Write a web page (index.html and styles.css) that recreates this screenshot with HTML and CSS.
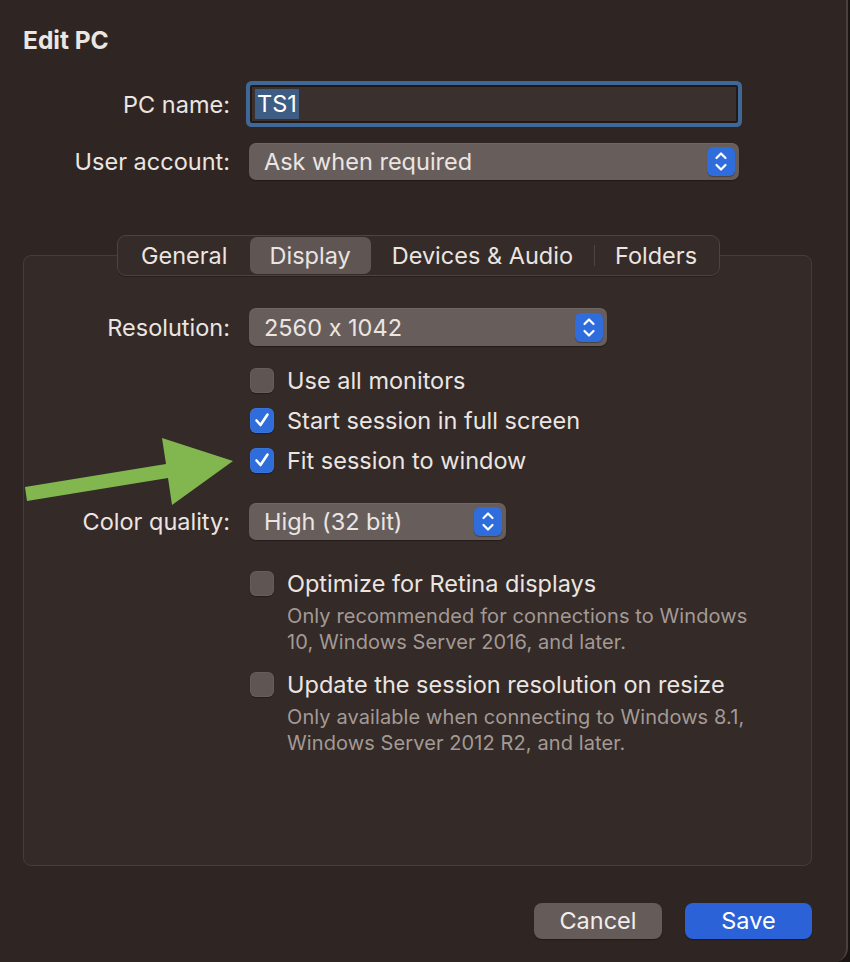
FILE: index.html
```html
<!DOCTYPE html>
<html>
<head>
<meta charset="utf-8">
<link rel="stylesheet" href="styles.css">
</head>
<body>
<div class="window">
  <h1 class="title">Edit PC</h1>

  <div class="form">
    <div class="row row-name">
      <div class="label">PC name:</div>
      <div class="field"><span class="sel">TS1</span></div>
    </div>
    <div class="row row-account">
      <div class="label">User account:</div>
      <div class="popup popup-account">
        <span>Ask when required</span>
        <span class="stepper"><svg viewBox="0 0 28 29" width="28" height="29"><path d="M9.5 11 L14 6.5 L18.5 11 M9.5 18 L14 22.5 L18.5 18" fill="none" stroke="#fff" stroke-width="2.2" stroke-linecap="round" stroke-linejoin="round"/></svg></span>
      </div>
    </div>
  </div>

  <div class="tabbox">
    <div class="tabs">
      <div class="tab">General</div>
      <div class="tab active">Display</div>
      <div class="tab">Devices &amp; Audio</div>
      <div class="tab sep">Folders</div>
    </div>

    <div class="panel">
      <div class="row row-res">
        <div class="label">Resolution:</div>
        <div class="popup popup-res">
          <span>2560 x 1042</span>
          <span class="stepper"><svg viewBox="0 0 28 29" width="28" height="29"><path d="M9.5 11 L14 6.5 L18.5 11 M9.5 18 L14 22.5 L18.5 18" fill="none" stroke="#fff" stroke-width="2.2" stroke-linecap="round" stroke-linejoin="round"/></svg></span>
        </div>
      </div>

      <div class="checks">
        <div class="check"><span class="box"></span><span>Use all monitors</span></div>
        <div class="check"><span class="box on"><svg viewBox="0 0 24 24" width="24" height="24"><path d="M6.5 12.5 L10.5 17 L17.5 6.5" fill="none" stroke="#fff" stroke-width="2.6" stroke-linecap="round" stroke-linejoin="round"/></svg></span><span>Start session in full screen</span></div>
        <div class="check"><span class="box on"><svg viewBox="0 0 24 24" width="24" height="24"><path d="M6.5 12.5 L10.5 17 L17.5 6.5" fill="none" stroke="#fff" stroke-width="2.6" stroke-linecap="round" stroke-linejoin="round"/></svg></span><span>Fit session to window</span></div>
      </div>

      <div class="row row-color">
        <div class="label">Color quality:</div>
        <div class="popup popup-color">
          <span>High (32 bit)</span>
          <span class="stepper"><svg viewBox="0 0 28 29" width="28" height="29"><path d="M9.5 11 L14 6.5 L18.5 11 M9.5 18 L14 22.5 L18.5 18" fill="none" stroke="#fff" stroke-width="2.2" stroke-linecap="round" stroke-linejoin="round"/></svg></span>
        </div>
      </div>

      <div class="option">
        <div class="check"><span class="box"></span><span>Optimize for Retina displays</span></div>
        <p class="desc">Only recommended for connections to Windows<br>10, Windows Server 2016, and later.</p>
      </div>
      <div class="option">
        <div class="check"><span class="box"></span><span>Update the session resolution on resize</span></div>
        <p class="desc">Only available when connecting to Windows 8.1,<br>Windows Server 2012 R2, and later.</p>
      </div>
    </div>
  </div>

  <div class="buttons">
    <div class="btn cancel">Cancel</div>
    <div class="btn save">Save</div>
  </div>

  <svg class="arrow" width="240" height="80" viewBox="0 0 240 80">
    <polygon points="25,57 166,34 162,8 233,31 172,75 168,48 27,71" fill="#82b750"/>
  </svg>
</div>
</body>
</html>
```

FILE: styles.css
```css
* { box-sizing: border-box; }
html, body { margin: 0; padding: 0; }
body {
  background: #1a1412;
  width: 850px;
  height: 962px;
  overflow: hidden;
  font-family: "Inter", "Noto Sans", sans-serif;
  font-feature-settings: "calt" 0;
  color: #ebe5e2;
  font-size: 23.5px;
}
.window {
  position: relative;
  width: 848px;
  height: 962px;
  background: #2f2623;
  border-right: 2px solid #4a413e;
  border-bottom-right-radius: 14px;
  padding: 0 34px 0 23px;
}
.title {
  margin: 0;
  padding-top: 26px;
  font-size: 24.5px;
  line-height: 28px;
  font-weight: 700;
  color: #ece6e3;
}
.form { margin-top: 27px; }
.row {
  display: grid;
  grid-template-columns: 207px auto;
  column-gap: 19px;
  align-items: center;
}
.label { text-align: right; color: #ebe5e2; }
.field {
  margin-left: 1px;
  width: 488px;
  height: 38px;
  margin-top: 4px;
  margin-bottom: 4px;
  border: 2px solid #221a17;
  background: #3a302d;
  box-shadow: 0 0 0 4px #3f6797;
  border-radius: 2px;
  display: flex;
  align-items: center;
  padding-left: 3px;
}
.sel {
  background: #3d5d85;
  color: #fff;
  padding: 0 2px;
  line-height: 30px;
}
.row-account { margin-top: 16px; }
.popup {
  height: 37px;
  background: #675e5b;
  border-radius: 7px;
  box-shadow: 0 1px 1px rgba(0,0,0,0.35), inset 0 1px 0 rgba(255,255,255,0.06);
  display: flex;
  align-items: center;
  justify-content: space-between;
  padding: 0 4px 0 15px;
}
.popup-account { width: 490px; }
.popup-res { width: 358px; height: 38px; }
.popup-color { width: 257px; }
.stepper {
  width: 28px;
  height: 29px;
  border-radius: 6px;
  background: #2f6ddd;
  display: flex;
  box-shadow: 0 1px 1px rgba(0,0,0,0.3);
}
.tabbox {
  margin-top: 75px;
  width: 789px;
  height: 611px;
  background: #342a27;
  border: 1px solid #463d3a;
  border-radius: 8px;
}
.tabs {
  width: fit-content;
  height: 41px;
  margin: -21px auto 0;
  transform: translateX(1px);
  background: #352b28;
  border: 1px solid #4d4340;
  border-radius: 9px;
  display: flex;
  align-items: center;
  padding: 1px;
  box-shadow: 0 1px 0 rgba(0,0,0,0.25);
}
.tab {
  height: 37px;
  line-height: 37px;
  padding: 0 21px;
  position: relative;
}
.tab:first-child { padding: 0 22px 0 22px; }
.tab.active {
  background: #5f5653;
  border-radius: 7px;
  padding: 0 20px;
}
.tab.sep::before {
  content: "";
  position: absolute;
  left: 0;
  top: 8px;
  height: 21px;
  width: 1px;
  background: #4d4441;
}
.panel { padding: 32px 0 0 0; }
.panel .row { grid-template-columns: 206px auto; }
.checks { margin-top: 14px; padding-left: 226px; }
.check {
  display: flex;
  align-items: center;
  gap: 13px;
  height: 40px;
}
.checks .check:nth-child(3) { height: 41px; }
.box {
  width: 24px;
  height: 25px;
  border-radius: 6px;
  background: #5f5653;
  box-shadow: inset 0 0 0 1px rgba(255,255,255,0.05), 0 1px 1px rgba(0,0,0,0.3);
  display: flex;
  flex: none;
}
.box.on { background: #2f6ddb; }
.row-color { margin-top: 22px; }
.row-color + .option { margin-top: 23px; }
.option { padding-left: 226px; }
.option + .option { margin-top: 9px; }
.desc {
  margin: 0;
  padding-left: 37px;
  font-size: 20px;
  letter-spacing: 0.1px;
  line-height: 26px;
  color: #a39a96;
}
.buttons {
  display: flex;
  justify-content: flex-end;
  gap: 23px;
  margin-top: 37px;
}
.btn {
  height: 36px;
  line-height: 36px;
  border-radius: 8px;
  text-align: center;
  color: #f2eeec;
  box-shadow: 0 1px 1px rgba(0,0,0,0.35);
}
.cancel { width: 128px; background: #655c59; }
.save { width: 127px; background: #2c62d8; color: #fff; }
.arrow {
  position: absolute;
  left: 0;
  top: 430px;
}
```
